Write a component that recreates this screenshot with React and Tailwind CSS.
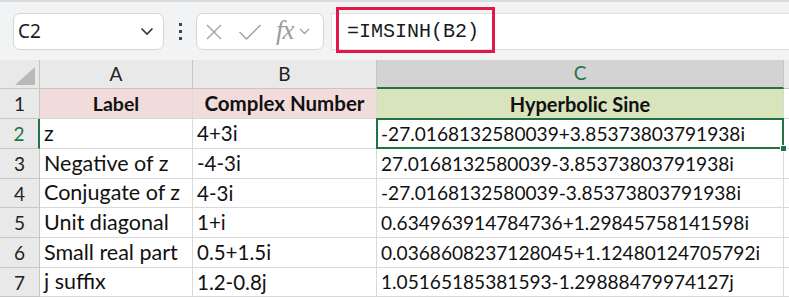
import React from "react";

const rows = [
  ["Negative of z", "-4-3i", "27.0168132580039-3.85373803791938i"],
  ["Conjugate of z", "4-3i", "-27.0168132580039-3.85373803791938i"],
  ["Unit diagonal", "1+i", "0.634963914784736+1.29845758141598i"],
  ["Small real part", "0.5+1.5i", "0.0368608237128045+1.12480124705792i"],
  ["j suffix", "1.2-0.8j", "1.05165185381593-1.29888479974127j"],
];

const heights = ["h-[30px]", "h-[29px]", "h-[30px]", "h-[30px]", "h-[29px]"];

function Toolbar() {
  return (
    <div className="h-[60px] bg-[#f2f3f5] border-t-[2px] border-[#dcdcdc] flex items-start pt-[11px]">
      <div className="ml-[13px] w-[151px] h-[37px] bg-white border border-[#d6d6d6] rounded-[7px] flex items-center justify-between pl-[4px] pr-[9px]">
        <span className="text-[19px] text-[#1a1a1a] font-['Noto_Sans',sans-serif] leading-none">C2</span>
        <svg width="14" height="9" viewBox="0 0 14 9">
          <polyline points="1.5,1.5 7,7 12.5,1.5" fill="none" stroke="#333" strokeWidth="1.6" />
        </svg>
      </div>
      <div className="w-[32px] flex flex-col items-center gap-[4px] pt-[10px]">
        <div className="w-[3px] h-[3px] bg-[#444]" />
        <div className="w-[3px] h-[3px] bg-[#444]" />
        <div className="w-[3px] h-[3px] bg-[#444]" />
      </div>
      <div className="w-[128px] h-[37px] bg-white border border-[#d6d6d6] rounded-[7px] flex items-center pl-[8px]">
        <svg width="18" height="18" viewBox="0 0 18 18">
          <path d="M2 2 L16 16 M16 2 L2 16" stroke="#a0a0a0" strokeWidth="1.3" fill="none" />
        </svg>
        <svg width="24" height="18" viewBox="0 0 24 18" className="ml-[15px]">
          <polyline points="1.5,9 8.5,16 22.5,2" stroke="#a0a0a0" strokeWidth="1.3" fill="none" />
        </svg>
        <span className="ml-[14px] text-[27px] italic text-[#9c9c9c] font-['Liberation_Serif',serif] leading-none tracking-[-1px] -mt-[3px]">fx</span>
        <svg width="11" height="7" viewBox="0 0 11 7" className="ml-[5px]">
          <polyline points="1,1 5.5,5.5 10,1" fill="none" stroke="#a0a0a0" strokeWidth="1.3" />
        </svg>
      </div>
      <div className="ml-[7px] flex-1 h-[37px] bg-white border-y border-l border-[#e0e0e0] relative flex items-center">
        <span className="ml-[15px] text-[20px] text-[#1a1a1a] font-['Liberation_Mono',monospace] leading-none">=IMSINH(B2)</span>
        <div className="absolute left-[4px] top-[-7px] w-[159px] h-[46px] border-[3px] border-[#e0194a]" />
      </div>
    </div>
  );
}

function Cell({ children, className = "" }) {
  return (
    <div className={`border-r border-b border-[#d9d9d9] flex items-center px-[4px] text-[#111] whitespace-nowrap overflow-visible leading-none ${className}`}>
      {children}
    </div>
  );
}

function RowHead({ n, className = "" }) {
  return (
    <div className={`bg-[#e9e9e9] border-r border-b border-[#c6c6c6] flex items-center justify-center text-[19px] text-[#222] leading-none ${className}`}>
      {n}
    </div>
  );
}

export default function App() {
  return (
    <div className="w-[789px] h-[298px] bg-white overflow-hidden font-['Lato',sans-serif]">
      <Toolbar />
      <div className="grid grid-cols-[40px_153px_184px_407px_5px]">
        <div className="h-[29px] bg-[#e9e9e9] border-r border-b border-[#c6c6c6] flex items-end justify-end pr-[4px] pb-[3px]">
          <svg width="20" height="18" viewBox="0 0 20 18">
            <polygon points="20,0 20,18 0,18" fill="#b9b9b9" />
          </svg>
        </div>
        <div className="h-[29px] bg-[#e9e9e9] border-r border-b border-[#c6c6c6] flex items-center justify-center text-[19px] text-[#222]">A</div>
        <div className="h-[29px] bg-[#e9e9e9] border-r border-b border-[#c6c6c6] flex items-center justify-center text-[19px] text-[#222]">B</div>
        <div className="h-[29px] bg-[#d3d3d3] border-r border-b-[2px] border-r-[#c6c6c6] border-b-[#217346] flex items-center justify-center text-[19px] text-[#217346]">C</div>
        <div className="h-[29px] bg-[#e9e9e9] border-b border-[#c6c6c6]" />

        <RowHead n="1" className="h-[30px]" />
        <Cell className="h-[30px] bg-[#f2dcdb] justify-center font-bold text-[19.5px]">Label</Cell>
        <Cell className="h-[30px] bg-[#f2dcdb] justify-center font-bold text-[20.5px]">Complex Number</Cell>
        <Cell className="h-[30px] bg-[#d8e4bc] justify-center font-bold text-[20px]">Hyperbolic Sine</Cell>
        <Cell className="h-[30px] border-r-0" />

        <RowHead n="2" className="h-[30px] bg-[#d3d3d3] text-[#217346] border-r-[2px] border-r-[#217346]" />
        <Cell className="h-[30px] text-[21.5px]">z</Cell>
        <Cell className="h-[30px] text-[20.5px]">4+3i</Cell>
        <Cell className="h-[30px] relative text-[19.1px]">
          -27.0168132580039+3.85373803791938i
          <div className="absolute left-[-1px] top-[-1px] right-[-1px] bottom-[-1px] border-[2px] border-[#217346]" />
          <div className="absolute right-[-4px] bottom-[-4px] w-[7px] h-[7px] bg-[#217346] border border-white" />
        </Cell>
        <Cell className="h-[30px] border-r-0" />

        {rows.map((r, i) => (
          <React.Fragment key={i}>
            <RowHead n={i + 3} className={heights[i]} />
            <Cell className={`${heights[i]} text-[21.5px]`}>{r[0]}</Cell>
            <Cell className={`${heights[i]} text-[20.5px]`}>{r[1]}</Cell>
            <Cell className={`${heights[i]} text-[19.1px]`}>{r[2]}</Cell>
            <Cell className={`${heights[i]} border-r-0`} />
          </React.Fragment>
        ))}
      </div>
    </div>
  );
}
